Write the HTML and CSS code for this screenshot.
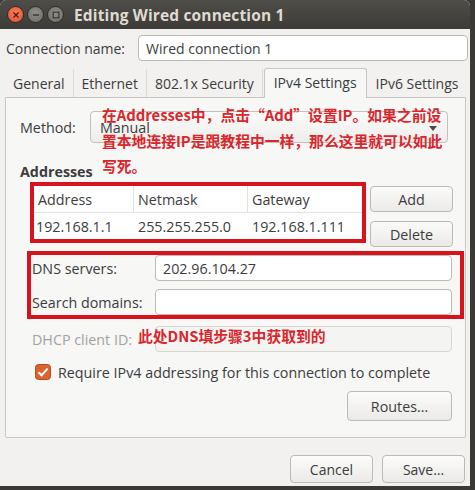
FILE: index.html
```html
<!DOCTYPE html>
<html>
<head>
<meta charset="utf-8">
<link rel="stylesheet" href="styles.css">
</head>
<body>
<div class="window">
  <div class="titlebar">
    <div class="wbtns">
      <span class="wb close"><svg width="8" height="8" viewBox="0 0 8 8"><path d="M1.5 1.5L6.5 6.5M6.5 1.5L1.5 6.5" stroke="#5a1a0c" stroke-width="1.4"/></svg></span>
      <span class="wb"><svg width="8" height="8" viewBox="0 0 8 8"><path d="M1 4H7" stroke="#3a3935" stroke-width="1.4"/></svg></span>
      <span class="wb"><svg width="8" height="8" viewBox="0 0 8 8"><rect x="1.2" y="1.2" width="5.6" height="5.6" fill="none" stroke="#3a3935" stroke-width="1.2"/></svg></span>
    </div>
    <div class="title">Editing Wired connection 1</div>
  </div>
  <div class="content">
    <div class="namerow">
      <span class="lbl">Connection name:</span>
      <div class="entry grow">Wired connection 1</div>
    </div>
    <div class="tabs">
      <div class="tab">General</div>
      <div class="tab">Ethernet</div>
      <div class="tab">802.1x Security</div>
      <div class="tab active">IPv4 Settings</div>
      <div class="tab last">IPv6 Settings</div>
    </div>
    <div class="panel">
      <div class="methodrow">
        <span class="lbl">Method:</span>
        <div class="combo"><span>Manual</span><span class="arrow"></span></div>
      </div>
      <div class="note note1">在Addresses中，点击“Add”设置IP。如果之前设<br>置本地连接IP是跟教程中一样，那么这里就可以如此<br>写死。</div>
      <div class="section">Addresses</div>
      <div class="addrrow">
        <div class="redbox box1">
          <div class="table">
            <div class="trow thead">
              <div class="c c1">Address</div>
              <div class="c c2">Netmask</div>
              <div class="c c3">Gateway</div>
            </div>
            <div class="trow">
              <div class="c c1">192.168.1.1</div>
              <div class="c c2">255.255.255.0</div>
              <div class="c c3">192.168.1.111</div>
            </div>
          </div>
        </div>
        <div class="sidebtns">
          <div class="btn small">Add</div>
          <div class="btn small">Delete</div>
        </div>
      </div>
      <div class="redbox box2">
        <div class="frow">
          <span class="flbl">DNS servers:</span>
          <div class="entry fentry">202.96.104.27</div>
        </div>
        <div class="frow">
          <span class="flbl">Search domains:</span>
          <div class="entry fentry"></div>
        </div>
      </div>
      <div class="frow dhcp">
        <span class="flbl dis">DHCP client ID:</span>
        <div class="entry fentry disabled"></div>
        <div class="note note2">此处DNS填步骤3中获取到的</div>
      </div>
      <div class="checkrow">
        <span class="check"><svg width="16" height="16" viewBox="0 0 16 16"><rect x="0.5" y="0.5" width="15" height="15" rx="3" fill="#d9642f" stroke="#b84d22"/><path d="M3.5 8.2L6.6 11.2L12.6 4.6" fill="none" stroke="#fff" stroke-width="2"/></svg></span>
        <span>Require IPv4 addressing for this connection to complete</span>
      </div>
      <div class="routesrow">
        <div class="btn routes">Routes…</div>
      </div>
    </div>
    <div class="footer">
      <div class="btn fbtn">Cancel</div>
      <div class="btn fbtn">Save…</div>
    </div>
  </div>
</div>
</body>
</html>
```
FILE: styles.css
```css
* { box-sizing: border-box; }
html, body { margin: 0; padding: 0; }
body {
  width: 475px;
  height: 490px;
  background: #3a3935;
  overflow: hidden;
  font-family: "Open Sans", "Noto Sans", sans-serif;
  font-size: 14px;
  color: #3c3c3c;
}
.window {
  width: 470px;
  height: 486px;
  background: #f2f1f0;
  border-radius: 6px 6px 0 0;
  overflow: hidden;
  display: flex;
  flex-direction: column;
}
.titlebar {
  height: 29px;
  background: linear-gradient(#4e4d48, #3c3b37);
  display: flex;
  align-items: center;
  padding-left: 7px;
}
.wbtns { display: flex; gap: 3px; }
.wb {
  width: 17px; height: 17px; border-radius: 50%;
  background: radial-gradient(circle at 50% 40%, #908f8a, #6b6a65);
  border: 1px solid #2e2d2a;
  display: flex; align-items: center; justify-content: center;
}
.wb.close { background: radial-gradient(circle at 50% 40%, #f7805a, #e2502b); }
.title {
  color: #dfdbd2;
  font-weight: bold;
  font-size: 15.5px;
  margin-left: 10px;
  letter-spacing: 0.15px;
}
.content {
  flex: 1;
  display: flex;
  flex-direction: column;
  padding: 6px 0 0 5px;
}
.namerow { display: flex; align-items: center; height: 26px; padding-right: 2px; }
.namerow .lbl { width: 133px; padding-left: 1px; }
.grow { flex: 1; }
.entry {
  height: 26px;
  background: #fff;
  border: 1px solid #bdbab4;
  border-radius: 4px;
  padding: 0 7px;
  display: flex; align-items: center;
  color: #3c3c3c;
}
.tabs {
  display: flex;
  margin-top: 7px;
  height: 29px;
  align-items: flex-end;
  position: relative;
  z-index: 1;
}
.tab {
  height: 28px;
  padding: 0 8px;
  display: flex; align-items: center;
  border-right: 1px solid #dcdad5;
  color: #3c3c3c;
}
.tab:first-child { padding-left: 8px; }
.tab.active {
  height: 30px;
  background: #f7f7f6;
  border: 1px solid #c8c6c1;
  border-bottom: none;
  border-radius: 3px 3px 0 0;
  margin: 0 1px 0 1px;
  padding: 0 9px 2px 9px;
  margin-bottom: -1px;
}
.tab.last { border-right: none; }
.panel {
  width: 461px;
  height: 341px;
  background: #f7f7f6;
  border: 1px solid #c8c6c1;
  border-radius: 0 0 2px 2px;
  position: relative;
  padding: 13px 0 0 14px;
  font-size: 14.3px;
}
.methodrow { display: flex; align-items: center; height: 32px; }
.methodrow .lbl { width: 70px; }
.combo {
  width: 358px; height: 32px;
  border: 1px solid #c3c0ba;
  border-radius: 4px;
  background: linear-gradient(#fbfbfa, #eeedeb);
  display: flex; align-items: center; justify-content: space-between;
  padding: 0 10px 0 9px;
}
.arrow {
  width: 0; height: 0;
  border-left: 4px solid transparent;
  border-right: 4px solid transparent;
  border-top: 5px solid #4c4c4c;
  margin-top: 2px;
}
.note {
  position: absolute;
  font-family: "Noto Sans CJK SC", sans-serif;
  font-weight: bold;
  color: #d9262c;
  font-size: 14.8px;
  white-space: nowrap;
}
.note1 { left: 96px; top: 4px; line-height: 25.5px; }
.note2 { left: 106px; top: 0px; line-height: 20px; }
.section { font-weight: bold; margin-top: 20px; height: 18px; line-height: 18px; }
.addrrow { display: flex; margin-top: 1px; align-items: flex-start; }
.redbox { border: 4px solid #d7141e; }
.box1 { width: 336px; height: 61px; margin-left: 10px; }
.table { background: #fff; height: 100%; }
.trow { display: flex; height: 26px; align-items: center; }
.thead { height: 27px; border-bottom: 1px solid #e4e2de; }
.thead .c { border-right: 1px solid #e4e2de; height: 100%; display: flex; align-items: center; }
.thead .c3 { border-right: none; }
.c { padding-left: 4px; }
.c1 { width: 100px; padding-left: 4px; }
.c2 { width: 114px; }
.c3 { flex: 1; }
.trow:not(.thead) .c1 { padding-left: 2px; }
.sidebtns { display: flex; flex-direction: column; gap: 9px; margin-left: 4px; margin-top: 4px; }
.btn {
  border: 1px solid #bdbab4;
  border-radius: 4px;
  background: linear-gradient(#fbfbfa, #ebeae8);
  display: flex; align-items: center; justify-content: center;
  color: #3c3c3c;
}
.btn.small { width: 83px; height: 26px; }
.box2 {
  width: 437px;
  height: 68px;
  margin-top: 4px;
  margin-left: 7px;
  padding: 0 6px 0 1px;
  display: flex; flex-direction: column; justify-content: center; gap: 8px;
}
.frow { display: flex; align-items: center; height: 26px; }
.flbl { width: 123px; }
.fentry { width: 297px; }
.dhcp { margin-left: 12px; margin-top: 7px; position: relative; }
.dis { color: #a3a29e; }
.entry.disabled { background: #f4f4f3; border-color: #d8d6d1; }
.checkrow { display: flex; align-items: center; margin-left: 15px; margin-top: 10px; gap: 7px; height: 20px; }
.check { display: flex; }
.routesrow { display: flex; justify-content: flex-end; padding-right: 13px; margin-top: 9px; }
.routes { width: 105px; height: 30px; }
.footer { display: flex; justify-content: flex-end; gap: 9px; padding-right: 5px; margin-top: 17px; }
.fbtn { width: 83px; height: 28px; }
```
